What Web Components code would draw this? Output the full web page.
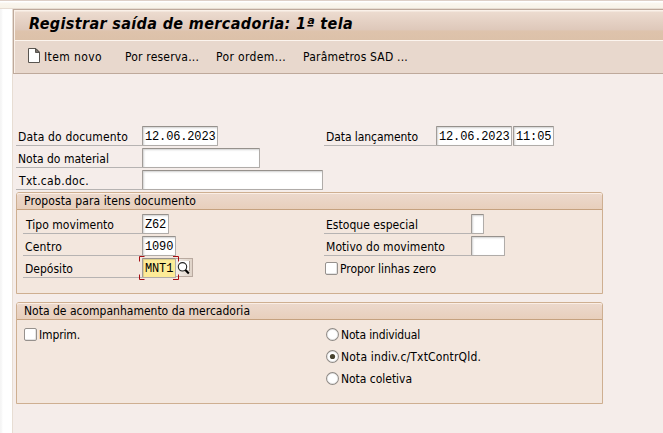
<!DOCTYPE html>
<html lang="pt-BR"><head><meta charset="utf-8"><title>Registrar saída de mercadoria</title>
<style>
html,body{margin:0;height:100%;overflow:hidden}
body{font:12px/16px "DejaVu Sans Condensed","DejaVu Sans",sans-serif;font-stretch:condensed;color:#000}
</style></head><body><goods-screen></goods-screen>
<script>
const define=(name,html,init)=>customElements.define(name,class extends HTMLElement{
  connectedCallback(){
    if(this.shadowRoot)return;
    const t=document.createElement('template');t.innerHTML=html;
    this.attachShadow({mode:'open'}).append(t.content.cloneNode(true));
    if(init)init.call(this,this.shadowRoot);
  }
});
/* Text run whose tracking is adjusted to occupy the width in "w". */
define('fit-text',`<style>:host{display:inline-block;white-space:pre;flex:none}span{display:inline-block}</style><span><slot></slot></span>`,function(r){
  const s=r.querySelector('span'),w=+this.getAttribute('w');
  this.style.width=w+'px';
  const n=this.textContent.length;
  s.style.letterSpacing=((w-s.getBoundingClientRect().width)/n)+'px';
});
define('sap-input',`<style>:host{display:block;flex:none;box-sizing:border-box;height:20px;border:1px solid #b0aca9;border-top-color:#96918c;border-left-color:#a19c98;border-radius:1px;background:#fff;box-shadow:inset 1px 1px 2px #d0d0d0;font:12px/20px "Courier New","Liberation Mono",monospace;letter-spacing:-.15px;padding-left:2px;white-space:pre;overflow:hidden}
:host([active]){background:#fdeb97;box-shadow:inset 1px 1px 1px #d9cc8a}</style><slot></slot>`,function(){this.style.width=this.getAttribute('w')+'px'});
/* Underlined label followed by its fields. */
define('sap-field',`<style>:host{display:flex;height:20px;margin-bottom:2px;align-items:flex-start}
.l{box-sizing:border-box;flex:none;height:20px;border-bottom:1px solid #b6b3b2;padding:3px 0 0 2px}</style><div class="l"><fit-text></fit-text></div><slot></slot>`,function(r){
  const l=r.querySelector('.l'),f=r.querySelector('fit-text');
  l.style.width=this.getAttribute('lw')+'px';
  if(this.hasAttribute('pad'))l.style.paddingLeft=this.getAttribute('pad')+'px';
  const n=document.createElement('fit-text');n.setAttribute('w',this.getAttribute('tw'));n.textContent=this.getAttribute('label');f.replaceWith(n);
});
define('sap-check',`<style>:host{display:flex;align-items:center;height:20px;margin-bottom:2px;gap:2px}
i{box-sizing:border-box;width:13px;height:13px;border:1px solid #96918d;border-radius:2px;background:#fff;box-shadow:inset -1px -1px 0 #e4e4e4}
::slotted(*){padding-top:2px}</style><i></i><slot></slot>`);
define('sap-radio',`<style>:host{display:flex;align-items:center;height:20px;margin-bottom:2px;gap:2px}
::slotted(*){padding-top:2px}
svg{display:block;width:13px;height:13px}.d{display:none}:host([checked]) .d{display:block}</style>
<svg viewBox="0 0 13 13"><circle cx="6.5" cy="6.5" r="5.9" fill="#fff" stroke="#8e8984" stroke-width="1.1"/><circle cx="6.5" cy="6.5" r="5" fill="none" stroke="#dedede" stroke-width=".6"/><circle class="d" cx="6.5" cy="6.5" r="2.6" fill="#48432f"/></svg><slot></slot>`);
define('sap-group',`<style>:host{display:block;box-sizing:border-box;width:587px;height:102px;border:1px solid #ceaf91;border-radius:3px 3px 0 0;background:#f3e7de}
header{box-sizing:border-box;height:17px;border-bottom:1px solid #c5a17f;border-radius:2px 2px 0 0;background:linear-gradient(#ecd9cd,#e8cfbc);box-shadow:inset 0 1px #fbeee5;padding-left:7px;line-height:16px}
.body{display:grid;grid-template-columns:301px 1fr;padding:4px 0 0 6px}</style><header><slot name="title"></slot></header><div class="body"><slot></slot></div>`);
define('match-button',`<style>:host{display:block;box-sizing:border-box;width:17px;height:19px;border:1px solid #b9aaa0;border-left:0;background:linear-gradient(90deg,#f3eee9,#dfd3c8)}
svg{display:block}</style><svg width="16" height="17" viewBox="0 0 16 17"><path d="M3 2h10v9H3z" fill="#fff"/><path d="M13.5 2v10" stroke="#a99c92"/><circle cx="6.5" cy="7.8" r="4.2" fill="#fff" stroke="#222" stroke-width="1.1"/><path d="M9.4 10.9 12.8 14.4" stroke="#000" stroke-width="2.1"/></svg>`);
/* Focus corners drawn over the active input. */
define('focus-frame',`<style>:host{display:block;position:relative}svg{position:absolute;left:-3px;top:-2px}</style><slot></slot>
<svg width="40" height="24" fill="none" stroke="#a50d12"><path d="M5.5.5H.5v5M34 .5h5.5v5M5.5 23.5H.5v-5M34 23.5h5.5v-5"/></svg>`);
define('sap-header',`<style>:host{display:block;box-sizing:border-box;height:65px;border:1px solid #bea99b;border-right:0;box-shadow:inset 1px 1px #faf1e9;background:#e8d8cd}
.t{box-sizing:border-box;height:31px;margin-left:1px;border-bottom:1px solid #fcf5ef;background:linear-gradient(#faf1e9 0 1px,#ecdbcf 2px,#dec8ba 66%,#dec3ac 70%,#dcc1a9);padding:4px 0 0 14px;font-size:16px;line-height:20px;font-weight:bold;font-style:italic}
.b{display:flex;box-sizing:border-box;height:32px;padding:8px 0 0 13px}
svg{flex:none;margin:-1px 4px 0 1px}</style><div class="t"><slot name="title"></slot></div>
<div class="b"><svg width="12" height="15" viewBox="0 0 12 15"><path d="M.5.5H8L11.5 4v10.5H.5z" fill="#fff" stroke="#595550"/><path d="M7.5.5v4h4z" fill="#77716b" stroke="#595550"/></svg><slot></slot></div>`);
define('goods-screen',`<style>
:host{display:block;box-sizing:border-box;width:663px;height:433px;border-top:1px solid #ded0c8;background:linear-gradient(90deg,#f5f5f5 0 1px,#fff 3px)}
main{box-sizing:border-box;height:432px;margin-left:12px;border-left:1px solid #e7ddd3;background:#f5edea}
.strip{height:8px;background:linear-gradient(#fff 0 1px,#faf6ef 2px,#f8f3e8 7px,#e7ddd3 7px)}
.form{padding:52px 0 0 3px}
.top{display:grid;grid-template-columns:308px 1fr;height:66px}
.g2{margin-top:8px}
.r{padding-left:2px}
.c,.sec{padding-left:1px}
</style><div class="strip"></div><main>
<sap-header><fit-text slot="title" w="324">Registrar saída de mercadoria: 1ª tela</fit-text>
<fit-text w="58" style="margin-right:23px">Item novo</fit-text><fit-text w="74" style="margin-right:17px">Por reserva...</fit-text><fit-text w="70" style="margin-right:17px">Por ordem...</fit-text><fit-text w="105">Parâmetros SAD ...</fit-text></sap-header>
<div class="form"><div class="top"><div>
<sap-field lw="126" label="Data do documento" tw="110"><sap-input w="76">12.06.2023</sap-input></sap-field>
<sap-field lw="126" label="Nota do material" tw="91"><sap-input w="118"></sap-input></sap-field>
<sap-field lw="126" label="Txt.cab.doc." tw="70" pad="3"><sap-input w="181"></sap-input></sap-field></div>
<div><sap-field lw="112" label="Data lançamento" tw="92"><sap-input w="76">12.06.2023</sap-input><sap-input w="41" style="margin-left:1px">11:05</sap-input></sap-field></div></div>
<sap-group><fit-text slot="title" w="172">Proposta para itens documento</fit-text>
<div><sap-field lw="119" label="Tipo movimento" tw="88" pad="3"><sap-input w="27">Z62</sap-input></sap-field>
<sap-field lw="119" label="Centro" tw="37"><sap-input w="34">1090</sap-input></sap-field>
<sap-field lw="119" label="Depósito" tw="48"><focus-frame><sap-input active w="34">MNT1</sap-input></focus-frame><match-button></match-button></sap-field></div>
<div><sap-field lw="147" label="Estoque especial" tw="92"><sap-input w="13"></sap-input></sap-field>
<sap-field lw="147" label="Motivo do movimento" tw="119"><sap-input w="34"></sap-input></sap-field>
<sap-check class="c"><fit-text w="96">Propor linhas zero</fit-text></sap-check></div></sap-group>
<sap-group class="g2"><fit-text slot="title" w="226">Nota de acompanhamento da mercadoria</fit-text>
<div><sap-check class="sec"><fit-text w="41">Imprim.</fit-text></sap-check></div>
<div class="r"><sap-radio><fit-text w="79">Nota individual</fit-text></sap-radio><sap-radio checked><fit-text w="140">Nota indiv.c/TxtContrQld.</fit-text></sap-radio><sap-radio><fit-text w="71">Nota coletiva</fit-text></sap-radio></div></sap-group>
</div></main>`);
</script></body></html>
